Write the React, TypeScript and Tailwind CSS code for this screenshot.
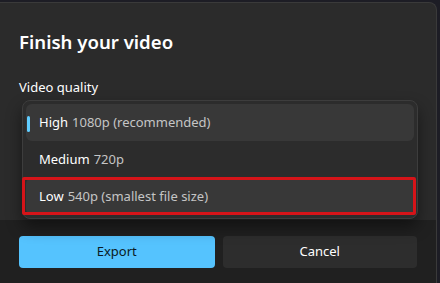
const font = { fontFamily: '"Noto Sans", "Open Sans", sans-serif' };

const OPTIONS = [
  { name: 'High', detail: '1080p (recommended)', selected: true },
  { name: 'Medium', detail: '720p' },
  { name: 'Low', detail: '540p (smallest file size)', hover: true },
];

function QualityMenu() {
  return (
    <div className="absolute left-[22px] top-[100px] w-[396px] rounded-lg border border-[#3d3d3d] bg-[#2c2c2c] p-[3px] shadow-[0_8px_16px_rgba(0,0,0,0.45)]">
      {OPTIONS.map((opt) => (
        <div
          key={opt.name}
          className={`relative flex h-[37px] items-center rounded-md pl-[13px] text-[13px] ${
            opt.selected ? 'bg-[#383838]' : opt.hover ? 'bg-[#383838]' : ''
          }`}
        >
          {opt.selected && (
            <span className="absolute left-[1px] top-[12px] h-[16px] w-[3px] rounded-full bg-[#60cdff]" />
          )}
          <span className="text-white">{opt.name}</span>
          <span className="ml-[4px] text-[#c5c5c5]">{opt.detail}</span>
        </div>
      ))}
    </div>
  );
}

export default function App() {
  return (
    <div className="relative h-[283px] w-[440px] overflow-hidden bg-[#1d1d25] pt-[2px]" style={font}>
      <div className="flex h-[281px] w-[437px] flex-col overflow-hidden rounded-tr-lg border-r border-t border-[#3a3a3a] bg-[#2b2b2b]">
        <div className="h-[217px] px-[19px] pt-[25px]">
          <h1 className="text-[18.6px] font-semibold leading-[28px] text-white">Finish your video</h1>
          <p className="mt-[21px] text-[13px] leading-[20px] text-white">Video quality</p>
        </div>
        <div className="flex flex-1 gap-[8px] bg-[#202020] px-[19px] pt-[16px]">
          <button className="h-[32px] w-[196px] rounded-[4px] bg-[#55c3fe] text-[13px] text-[#0a1a24]">
            Export
          </button>
          <button className="h-[32px] w-[195px] rounded-[4px] bg-[#2d2d2d] text-[13px] text-white">
            Cancel
          </button>
        </div>
      </div>
      <QualityMenu />
      <div className="pointer-events-none absolute left-[22px] top-[177px] h-[38px] w-[394px] rounded-[2px] border-[3px] border-[#d51419]" />
    </div>
  );
}
